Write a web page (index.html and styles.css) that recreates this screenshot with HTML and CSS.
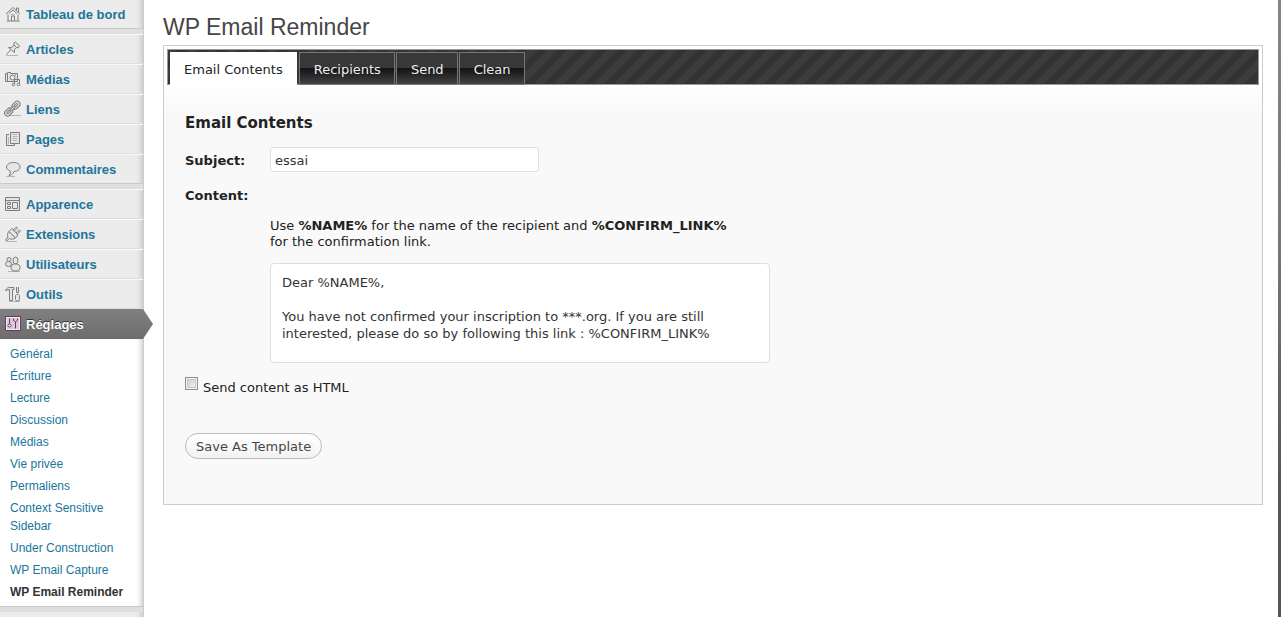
FILE: index.html
```html
<!DOCTYPE html>
<html lang="fr">
<head>
<meta charset="utf-8">
<title>WP Email Reminder</title>
<link rel="stylesheet" href="styles.css">
</head>
<body>
<div class="layout">
  <nav class="sidebar">
    <ul class="menu menu-first">
      <li><a class="item" href="#"><svg class="icon" viewBox="0 0 16 16"><path class="s" d="M1 8 8 1.500l7 6.500M3 8.500V15h10V8.500M11.500 4V2h2v4M6.500 15v-5h3v5M4 7.500 8 4l4 3.500" /><path class="l" d="M1 15.500h14M6 8.500h4"/></svg>Tableau de bord</a></li>
    </ul>
    <ul class="menu">
      <li><a class="item" href="#"><svg class="icon" viewBox="0 0 16 16"><path class="l" d="M1 14.500h12"/><path class="f" d="M8.500 2.500 10.500 1 14.500 5 13 7l-1.500-.500-2 2v3L3.500 6.500h3l2.500-2z"/><path class="s" d="M5.500 9 1.500 13.500M9 4l3 3"/></svg>Articles</a></li>
      <li><a class="item" href="#"><svg class="icon" viewBox="0 0 16 16"><path class="f" d="M.500 2.500h2v-1h3v1h7v8H.500z"/><circle class="s" cx="7.500" cy="6.500" r="2.500"/><path class="s" d="M2.500 3v7M10 4h1"/><path class="s" d="M9.500 13V8.500h5V13"/><circle class="f" cx="8.500" cy="13.500" r="1.300"/><circle class="f" cx="13.500" cy="13.500" r="1.300"/></svg>Médias</a></li>
      <li><a class="item" href="#"><svg class="icon" viewBox="0 0 16 16"><path class="l" d="M4 14.500h12"/><g transform="rotate(-43 7 8)"><rect class="f" x="-2" y="5" width="9" height="6" rx="3"/><rect class="s" x=".500" y="7" width="4" height="2" rx="1"/><rect class="f" x="8" y="5" width="9" height="6" rx="3"/><rect class="s" x="10.500" y="7" width="4" height="2" rx="1"/><rect class="f" x="4.500" y="7" width="6" height="2" rx="1"/></g></svg>Liens</a></li>
      <li><a class="item" href="#"><svg class="icon" viewBox="0 0 16 16"><path class="f" d="M4 3.500H1.500v11h8V13"/><path class="l" d="M3.500 6v7"/><path class="f" d="M5.500 1.500h9v11h-9z"/><path class="l" d="M7.500 3.500h5M7.500 5.500h5M7.500 7.500h5M7.500 9.500h5"/></svg>Pages</a></li>
      <li><a class="item" href="#"><svg class="icon" viewBox="0 0 16 16"><path class="l" d="M1 15.500h9"/><path class="f" d="M8.500 1.500c4 0 6.500 2 6.500 4.500s-2.500 4.500-6 4.500c-1 2.500-3 4-5 4 1-1.500 1.500-3 1.200-4.500C3 9 1.500 8 1.500 6c0-2.500 3-4.500 7-4.500z"/></svg>Commentaires</a></li>
    </ul>
    <ul class="menu">
      <li><a class="item" href="#"><svg class="icon" viewBox="0 0 16 16"><path class="f" d="M.500 1.500h14v13H.500z"/><path class="s" d="M.500 4.500h14M2.500 6.500h3v2h-3zM2.500 10.500h3v2h-3zM7.500 6.500h5v6h-5z"/></svg>Apparence</a></li>
      <li><a class="item" href="#"><svg class="icon" viewBox="0 0 16 16"><path class="l" d="M2 15.500h10"/><path class="f" d="M4 5.500 10.500 12c-2 1.500-4.500 1.500-6 .500L1.500 15 .500 14l2.500-3c-1-1.500-.500-4 1-5.500z"/><path class="f" d="m4 5.500 3-3L13 9l-2.500 3z"/><path class="s" d="m8 4 3.500-3 1 1L9 5.500M11 7l3.500-3 1 1L12 8.500"/></svg>Extensions</a></li>
      <li><a class="item" href="#"><svg class="icon" viewBox="0 0 16 16"><path class="l" d="M3 15.500h12"/><circle class="f" cx="4" cy="3.500" r="2"/><ellipse class="f" cx="3.500" cy="8" rx="3" ry="2.500"/><ellipse class="f" cx="10.500" cy="4.500" rx="2.500" ry="3.500"/><ellipse class="f" cx="10.500" cy="11.500" rx="4.500" ry="3.500"/></svg>Utilisateurs</a></li>
      <li><a class="item" href="#"><svg class="icon" viewBox="0 0 16 16"><path class="l" d="M4 15.500h11"/><path class="f" d="M.500 4.500C1.500 2 3 1.500 5 1.500h4v2H7.500v11h-3v-11z"/><path class="f" d="M11.500 1v5.500h2V1M11.500 8.500l-1 1v4l1 1.500h2l1-1.500v-4l-1-1z"/></svg>Outils</a></li>
      <li><a class="item current" href="#"><svg class="icon" viewBox="0 0 16 16"><path fill="#f4eaf3" stroke="#653b63" d="M.500.500h15v14H.500z"/><path fill="#dcc8da" d="M2 2h12v11H2z"/><path fill="none" stroke="#653b63" d="M4.500 2.500V8M10.500 6v6.500M8.500 2.500v2l2 1.500 2-1.500v-2"/><circle cx="4.500" cy="9.500" r="1.500" fill="#fff" stroke="#653b63"/></svg>Réglages</a>
        <ul class="submenu">
          <li><a href="#">Général</a></li>
          <li><a href="#">Écriture</a></li>
          <li><a href="#">Lecture</a></li>
          <li><a href="#">Discussion</a></li>
          <li><a href="#">Médias</a></li>
          <li><a href="#">Vie privée</a></li>
          <li><a href="#">Permaliens</a></li>
          <li><a href="#">Context Sensitive Sidebar</a></li>
          <li><a href="#">Under Construction</a></li>
          <li><a href="#">WP Email Capture</a></li>
          <li><a class="active" href="#">WP Email Reminder</a></li>
        </ul>
      </li>
    </ul>
  </nav>
  <main class="content">
    <h1>WP Email Reminder</h1>
    <form class="panel">
      <div class="tabs">
        <button type="button" class="tab selected">Email Contents</button>
        <button type="button" class="tab">Recipients</button>
        <button type="button" class="tab">Send</button>
        <button type="button" class="tab">Clean</button>
      </div>
      <section class="pane">
        <h2>Email Contents</h2>
        <div class="row">
          <label for="subject">Subject:</label>
          <input id="subject" type="text" value="essai">
        </div>
        <div class="row">
          <label for="body">Content:</label>
        </div>
        <div class="body-field">
          <p>Use <strong>%NAME%</strong> for the name of the recipient and <strong>%CONFIRM_LINK%</strong> for the confirmation link.</p>
          <textarea id="body">Dear %NAME%,

You have not confirmed your inscription to ***.org. If you are still interested, please do so by following this link : %CONFIRM_LINK%</textarea>
        </div>
        <div class="check">
          <input id="html" type="checkbox">
          <label for="html">Send content as HTML</label>
        </div>
        <button type="button" class="save">Save As Template</button>
      </section>
    </form>
  </main>
  <div class="edge"></div>
</div>
</body>
</html>
```
FILE: styles.css
```css
* { box-sizing: border-box; }
body {
  margin: 0;
  background: #fff;
  color: #222;
  font: 13px/16px "DejaVu Sans", sans-serif;
}
ul { margin: 0; padding: 0; list-style: none; }
h1, h2, p { margin: 0; }
button, input, textarea { font: inherit; color: inherit; }
.layout {
  display: flex;
  height: 100vh;
  overflow: hidden;
}

.sidebar {
  flex: none;
  width: 144px;
  border-right: 1px solid #ccc;
  background: #ececec;
  box-shadow: inset -6px 0 6px -5px #bbb;
  font-family: "Liberation Sans", Arial, sans-serif;
}
.menu { border-bottom: 5px solid #dfdfdf; }
.item {
  display: flex;
  align-items: center;
  gap: 5px;
  height: 30px;
  padding: 2px 0 0 5px;
  border-top: 1px solid #f9f9f9;
  border-bottom: 1px solid #dfdfdf;
  color: #21759b;
  font-size: 13px;
  font-weight: bold;
  text-decoration: none;
}
.menu-first .item { height: 29px; border-top: 0; }
.menu > li:last-child > .item { border-bottom-color: #c8c8c8; }
.icon { width: 16px; height: 16px; margin-bottom: 2px; overflow: visible; }
.s { fill: none; stroke: #7d7d7d; }
.f { fill: #e6e6e6; stroke: #7d7d7d; }
.l { fill: none; stroke: #b5b5b5; }
.menu > li:last-child > .item.current {
  position: relative;
  border-color: #808080 transparent #6d6d6d;
  background: linear-gradient(#808080, #6d6d6d);
  color: #fff;
  text-shadow: 0 -1px #333;
}
.item.current::after {
  content: "";
  position: absolute;
  top: -1px;
  bottom: -1px;
  left: 100%;
  width: 10px;
  background: linear-gradient(#808080, #6d6d6d);
  clip-path: polygon(0 0, 100% 50%, 0 100%);
}
.submenu {
  padding: 4px 10px 3px;
  border-bottom: 1px solid #c8c8c8;
  background: #fff;
  box-shadow: inset -6px 0 6px -5px #bbb;
  font-size: 12px;
  line-height: 18px;
}
.submenu a {
  display: block;
  padding: 2px 0;
  color: #21759b;
  text-decoration: none;
}
.submenu .active { color: #333; font-weight: bold; white-space: nowrap; }

.content { flex: 1; padding: 12px 15px 0 19px; }
h1 {
  padding-bottom: 3px;
  color: #464646;
  font: 23px/30px "Liberation Sans", Arial, sans-serif;
}
.panel {
  padding: 3px;
  border: 1px solid #ccc;
  background: linear-gradient(#fff 36px, #f9f9f9 64px);
}
.tabs {
  display: flex;
  gap: 1px;
  height: 36px;
  padding: 2px 2px 0;
  border: 1px solid #999;
  background: #333 linear-gradient(135deg, #3c3c3c 25%, #333 25%, #333 50%, #3c3c3c 50%, #3c3c3c 75%, #333 75%) 0 0 / 20px 20px;
}
.tab {
  height: 33px;
  padding: 2px 13px 0 14px;
  border: 1px solid #777;
  background: linear-gradient(#383838 15px, #111 15px, #444);
  color: #eee;
  text-align: center;
}
.tab.selected {
  margin-right: 1px;
  padding: 2px 14px 0;
  border: 0;
  background: #fff;
  color: #222;
}
.pane { padding: 28px 18px 42px; }
h2 { margin-bottom: 14px; font-size: 15px; line-height: 20px; }
.row {
  display: flex;
  align-items: center;
  height: 25px;
  margin-bottom: 10px;
}
.row label { width: 85px; padding-top: 2px; font-weight: bold; }
.row input {
  width: 269px;
  height: 25px;
  padding: 3px 4px 1px;
  border: 1px solid #dfdfdf;
  border-radius: 3px;
  background: #fff;
  color: #333;
}
.body-field { max-width: 585px; padding: 1px 0 0 85px; }
.body-field p { max-width: 478px; }
textarea {
  display: block;
  width: 100%;
  height: 100px;
  margin: 13px 0 14px;
  padding: 10px 11px;
  border: 1px solid #dfdfdf;
  border-radius: 4px;
  background: #fff;
  color: #333;
  line-height: 17px;
  resize: none;
  overflow: hidden;
}
.check { display: flex; gap: 5px; margin-bottom: 37px; }
.check input {
  appearance: none;
  width: 13px;
  height: 13px;
  margin: 0;
  border: 1px solid #8e8f8f;
  background: linear-gradient(135deg, #c5c9d0, #f6f6f6);
  box-shadow: inset 0 0 0 1px #f4f4f4, inset 0 0 0 2px #c4c8cc;
}
.check label { padding-top: 3px; }
.save {
  display: block;
  height: 26px;
  padding: 2px 10px 0;
  border: 1px solid #bbb;
  border-radius: 13px;
  background: linear-gradient(#fff, #f2f2f2);
  color: #464646;
}
.edge { flex: none; width: 3px; background: linear-gradient(#858585, #777 40%, #555 80%); }
```
